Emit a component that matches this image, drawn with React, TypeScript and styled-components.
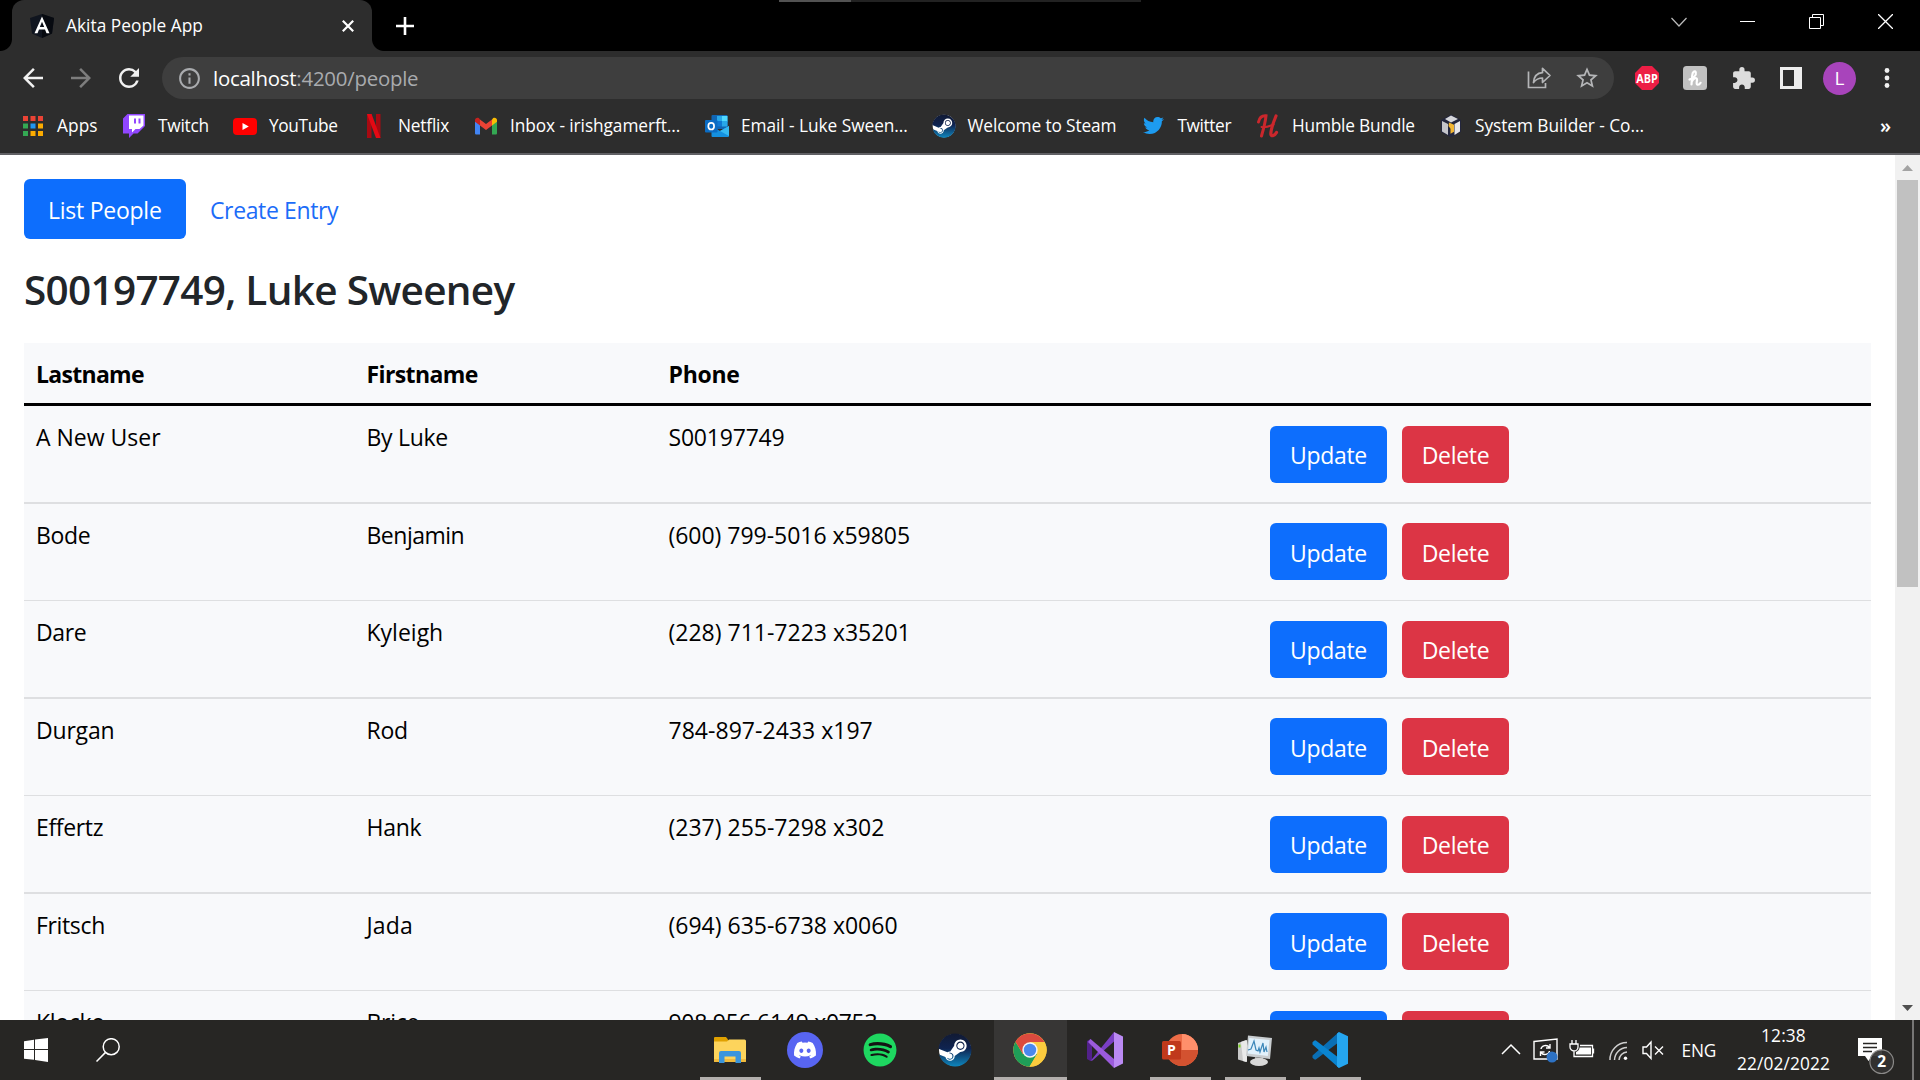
import React from 'react';
import styled, { createGlobalStyle } from 'styled-components';
import { MdArrowBack, MdArrowForward, MdRefresh, MdInfoOutline, MdStarBorder, MdExtension } from 'react-icons/md';
import { FaDiscord, FaSteam, FaTwitter, FaSpotify } from 'react-icons/fa';

const Global = createGlobalStyle`
  * { box-sizing: border-box; }
  html, body { margin: 0; padding: 0; overflow: hidden; }
  body { font-family: "Open Sans", "Noto Sans", sans-serif; background: #fff; }
  svg { display: block; flex: none; }
`;

const Screen = styled.div`
  width: 1920px;
  height: 1080px;
  display: flex;
  flex-direction: column;
  overflow: hidden;
`;

/* ---------- title bar ---------- */

const TitleBar = styled.header`
  position: relative;
  height: 51px;
  flex: none;
  background: #000;
  display: flex;
  justify-content: space-between;
`;

const TopProgress = styled.div`
  position: absolute;
  top: 0;
  left: 779px;
  width: 362px;
  height: 2px;
  background: linear-gradient(to right, #525252 72px, #222 72px);
`;

const TabArea = styled.div`
  display: flex;
  align-items: center;
`;

const Tab = styled.div`
  position: relative;
  width: 360px;
  height: 51px;
  margin-left: 12px;
  padding: 0 18px;
  display: flex;
  align-items: center;
  border-radius: 12px 12px 0 0;
  background: #2d2d2d;
  &::before,
  &::after {
    content: '';
    position: absolute;
    bottom: 0;
    width: 12px;
    height: 12px;
  }
  &::before {
    left: -12px;
    background: radial-gradient(circle at 0 0, #000 11.5px, #2d2d2d 12.5px);
  }
  &::after {
    right: -12px;
    background: radial-gradient(circle at 100% 0, #000 11.5px, #2d2d2d 12.5px);
  }
`;

const TabTitle = styled.span`
  flex: 1;
  margin-left: 12px;
  font-size: 17.3px;
  letter-spacing: 0.04px;
  color: #fff;
  white-space: nowrap;
`;

const NewTab = styled.div`
  margin-left: 24px;
`;

const WindowControls = styled.div`
  display: flex;
`;

const WindowButton = styled.div`
  width: 69px;
  height: 43px;
  display: flex;
  align-items: center;
  justify-content: center;
`;

/* ---------- toolbar ---------- */

const Toolbar = styled.div`
  height: 54px;
  flex: none;
  background: #2d2d2d;
  display: flex;
  align-items: center;
  padding: 0 24px 0 18px;
`;

const NavButtons = styled.div`
  width: 144px;
  display: flex;
  gap: 18px;
`;

const NavIcon = styled.div<{ $dim?: boolean }>`
  width: 30px;
  height: 30px;
  color: ${(p) => (p.$dim ? '#7d7d7d' : '#f1f1f1')};
`;

const Omnibox = styled.div`
  width: 1452px;
  height: 42px;
  border-radius: 21px;
  background: #3e3e3e;
  display: flex;
  align-items: center;
  padding: 0 14px 0 15px;
  color: #a9abae;
`;

const Url = styled.span`
  flex: 1;
  margin-left: 11px;
  font-size: 20.4px;
  letter-spacing: -0.23px;
  color: #a9abae;
  b {
    font-weight: 400;
    color: #fff;
  }
`;

const OmniActions = styled.div`
  display: flex;
  align-items: center;
  gap: 22px;
`;

const Extensions = styled.div`
  display: flex;
  align-items: center;
  gap: 24px;
  padding-left: 21px;
`;

const Avatar = styled.div`
  width: 33px;
  height: 33px;
  margin: 0 4px 0 -3px;
  border-radius: 50%;
  background: #a844bb;
  color: #fff;
  font-size: 19px;
  line-height: 33px;
  text-align: center;
`;

/* ---------- bookmarks ---------- */

const BookmarkBar = styled.div`
  height: 50px;
  flex: none;
  background: #2d2d2d;
  border-bottom: 2px solid #606064;
  display: flex;
  align-items: center;
  padding: 0 29px 7px 21px;
`;

const Bookmark = styled.div<{ $width: number; $track: number }>`
  width: ${(p) => p.$width}px;
  display: flex;
  align-items: center;
  gap: 12px;
  font-size: 17.3px;
  letter-spacing: ${(p) => p.$track}px;
  line-height: 24px;
  color: #fff;
  white-space: nowrap;
`;

const Overflow = styled.span`
  margin-left: auto;
  font-size: 20px;
  font-weight: 600;
  line-height: 20px;
  color: #fff;
`;

/* ---------- page ---------- */

const Viewport = styled.div`
  height: 865px;
  flex: none;
  display: flex;
  background: #fff;
  overflow: hidden;
`;

const Page = styled.main`
  flex: 1;
  height: 865px;
  overflow: hidden;
  padding: 24px 24px 0;
`;

const Pills = styled.nav`
  display: flex;
`;

const Pill = styled.a<{ $active?: boolean }>`
  height: 60px;
  padding: 0 24px;
  width: ${(p) => (p.$active ? '162px' : 'auto')};
  border-radius: 6px;
  font-size: 23px;
  letter-spacing: ${(p) => (p.$active ? -0.25 : -0.38)}px;
  line-height: 62px;
  white-space: nowrap;
  color: ${(p) => (p.$active ? '#fff' : '#1c6cf8')};
  background: ${(p) => (p.$active ? '#0d6efd' : 'transparent')};
`;

const Heading = styled.h2`
  margin: 26px 0 28px;
  font-size: 40.5px;
  font-weight: 600;
  line-height: 50px;
  letter-spacing: -0.7px;
  color: #212529;
`;

const Table = styled.div`
  background: #f8f9fb;
  color: #000;
  font-size: 23px;
`;

const Row = styled.div<{ $even?: boolean }>`
  display: grid;
  grid-template-columns: 330px 302px 602px 1fr;
  height: ${(p) => (p.$even ? 97 : 98)}px;
  border-bottom: ${(p) => (p.$even ? 1 : 2)}px solid #dedfe1;
`;

const HeadRow = styled(Row)`
  height: 63px;
  border-bottom: 3px solid #000;
  font-weight: 700;
`;

const Cell = styled.div<{ $track?: number }>`
  padding: 13px 12px 0 12.5px;
  line-height: 36px;
  letter-spacing: ${(p) => p.$track ?? -0.3}px;
  white-space: nowrap;
  &:first-child {
    padding-left: 12px;
  }
`;

const Action = styled.button<{ $danger?: boolean }>`
  width: ${(p) => (p.$danger ? 107 : 117)}px;
  height: 57px;
  padding: 0;
  border: 0;
  border-radius: 6px;
  background: ${(p) => (p.$danger ? '#dc3545' : '#0d6efd')};
  color: #fff;
  font: 400 23px/54px "Open Sans", "Noto Sans", sans-serif;
  letter-spacing: -0.3px;
`;

const Actions = styled.div<{ $even?: boolean }>`
  display: flex;
  gap: 15px;
  padding: ${(p) => (p.$even ? 19 : 20)}px 12px 0;
  ${Action} {
    padding-top: ${(p) => (p.$even ? 3 : 2)}px;
    line-height: ${(p) => (p.$even ? 54 : 53)}px;
  }
`;

const Scrollbar = styled.div`
  width: 25px;
  height: 865px;
  background: #f1f1f1;
  display: flex;
  flex-direction: column;
  align-items: center;
`;

const ScrollArrow = styled.div`
  height: 25px;
  display: flex;
  align-items: center;
  justify-content: center;
`;

const ScrollThumb = styled.div`
  width: 21px;
  height: 407px;
  margin-bottom: auto;
  background: #c1c1c1;
`;

/* ---------- taskbar ---------- */

const Taskbar = styled.footer`
  height: 60px;
  flex: none;
  background: #272624;
  display: flex;
`;

const StartArea = styled.div`
  width: 694px;
  padding-left: 24px;
  display: flex;
  align-items: center;
  gap: 48px;
`;

const TaskSlots = styled.div`
  display: flex;
  gap: 2px;
`;

const TaskSlot = styled.div<{ $open?: boolean; $active?: boolean }>`
  width: 73px;
  height: 60px;
  display: flex;
  flex-direction: column;
  align-items: center;
  background: ${(p) => (p.$active ? '#373635' : 'transparent')};
  &::after {
    content: '';
    width: ${(p) => (p.$active ? 73 : 61)}px;
    height: 3px;
    background: ${(p) => (p.$open ? '#b3afad' : 'transparent')};
  }
`;

const TaskIcon = styled.div`
  flex: 1;
  padding: 3px 1px 0 0;
  display: flex;
  align-items: center;
`;

const Tray = styled.div`
  flex: 1;
  display: flex;
  align-items: center;
  padding-left: 131px;
  color: #fff;
  font-size: 17.3px;
  letter-spacing: -0.2px;
`;

const TrayIcons = styled.div`
  display: flex;
  align-items: center;
  gap: 10px;
  padding-left: 1px;
`;

const Language = styled.span`
  width: 36px;
  margin-left: 16.5px;
  margin-top: 1px;
  line-height: 24px;
`;

const Clock = styled.div`
  width: 110px;
  margin-left: 11px;
  text-align: center;
  line-height: 28px;
  letter-spacing: 0.15px;
`;

const Notifications = styled.div`
  margin-left: 18px;
  padding-top: 11px;
`;

const ShowDesktop = styled.div`
  width: 8px;
  height: 60px;
  margin-left: auto;
  border-left: 2px solid #777675;
`;

/* ---------- logos ---------- */

const AngularLogo = () => (
  <svg width="24" height="24" viewBox="0 0 24 24">
    <path d="M12 0 24 4l-2 15.500L12 24 2 19.500 0 4z" fill="#10151f" />
    <path d="M12 0 24 4l-2 15.500L12 24z" fill="#070a10" />
    <path d="M12 2.400 4.500 19.200h3l1.500-3.700h6l1.500 3.700h3zM12 7.800l2.200 5.300H9.800z" fill="#fff" fillRule="evenodd" />
  </svg>
);

const AppsLogo = () => {
  const colors = ['#ea4335', '#ea4335', '#ea4335', '#34a853', '#2196f3', '#fbab00', '#34a853', '#fbab00', '#fbab00'];
  return (
    <svg width="24" height="24" viewBox="0 0 24 24">
      {colors.map((c, i) => (
        <rect key={i} x={2 + (i % 3) * 7.500} y={2 + Math.floor(i / 3) * 7.500} width="5" height="5" fill={c} />
      ))}
    </svg>
  );
};

const TwitchLogo = () => (
  <svg width="24" height="24" viewBox="0 0 24 24">
    <path d="M5.500 0 1 4.500v15h6V24l4.500-4.500h4L23 12V0z" fill="#9146ff" />
    <path d="M7 1.500h14.500v10L17.500 15h-4L10 18.500V15H7z" fill="#fff" />
    <path d="M12 4.500h2v5h-2zM16.500 4.500h2v5h-2z" fill="#9146ff" />
  </svg>
);

const YouTubeLogo = () => (
  <svg width="24" height="24" viewBox="0 0 24 24">
    <rect x="0" y="4" width="24" height="17" rx="4" fill="#f00" />
    <path d="M9.500 9v7l6.300-3.500z" fill="#fff" />
  </svg>
);

const NetflixLogo = () => (
  <svg width="24" height="24" viewBox="0 0 24 24">
    <path d="M5 0h4.500v24L5 23.900zM14 0h4.500v24L14 23.900z" fill="#a80a12" />
    <path d="M5 0h4.600l8.900 24H14z" fill="#e50914" />
  </svg>
);

const GmailLogo = () => (
  <svg width="24" height="24" viewBox="0 0 24 24">
    <path d="M1 7v12.200c0 .800.600 1.400 1.400 1.400H6V10z" fill="#4285f4" />
    <path d="M18 10v10.600h3.600c.800 0 1.400-.600 1.400-1.400V7z" fill="#34a853" />
    <path d="M18 5.500v6L23 7.700V6c0-2-2.200-3-3.800-1.900z" fill="#fbbc04" />
    <path d="M6 11.500v-6l6 4.500 6-4.500v6L12 16z" fill="#ea4335" />
    <path d="M1 6v1.700l5 3.800v-6L4.800 4.100C3.200 3 1 4 1 6z" fill="#c5221f" />
  </svg>
);

const OutlookLogo = () => (
  <svg width="24" height="24" viewBox="0 0 24 24">
    <rect x="6.500" y="1" width="16" height="14" rx="1" fill="#1066b5" />
    <rect x="12" y="2" width="5.500" height="5.500" fill="#28a8ea" />
    <rect x="17" y="2" width="5.500" height="5.500" fill="#50d9ff" />
    <rect x="12" y="7" width="5.500" height="5.500" fill="#0f78d4" />
    <rect x="17" y="7" width="5.500" height="5.500" fill="#28a8ea" />
    <path d="M6.500 12 15 17l9-5v10a1 1 0 0 1-1 1H7.500a1 1 0 0 1-1-1z" fill="#1490df" />
    <path d="M15 17l9-5v10z" fill="#35b8f1" />
    <rect x="0" y="6" width="12.500" height="12.500" rx="1" fill="#0a6cc4" />
    <ellipse cx="6.200" cy="12.200" rx="2.900" ry="3.300" fill="none" stroke="#fff" strokeWidth="1.700" />
  </svg>
);

const SteamLogo = ({ size, id }: { size: number; id: string }) => (
  <svg width={size} height={size} viewBox="0 0 34 34">
    <defs>
      <linearGradient id={id} x1="0" y1="0" x2="0" y2="1">
        <stop offset="0" stopColor="#111a33" />
        <stop offset="0.450" stopColor="#0f2350" />
        <stop offset="1" stopColor="#0e86bd" />
      </linearGradient>
    </defs>
    <circle cx="17" cy="17" r="16" fill="#fff" />
    <FaSteam size={34} fill={`url(#${id})`} />
  </svg>
);

const HumbleLogo = () => (
  <svg width="24" height="24" viewBox="0 0 24 24" fill="none" stroke="#cb272c" strokeLinecap="round">
    <path d="M2.500 8C3.500 3.500 6 1.500 10 1.800 9.500 7 7.500 15 5.500 22" strokeWidth="3" />
    <path d="M20 2C17.500 8 15 15 14.800 20c0 2.500 3.700 2.300 5.700-1.500" strokeWidth="3.200" />
    <path d="M5.500 13c4 .800 8-.500 12-2.500" strokeWidth="2" />
  </svg>
);

const BuilderLogo = () => (
  <svg width="24" height="24" viewBox="0 0 24 24">
    <path d="M12 .500 22 6v12l-10 5.500L2 18V6z" fill="#23263c" />
    <path d="M12 1.500 19 5l-7 3.500L6 5z" fill="#d5d6da" />
    <path d="M3 7l6 3v11l-6-3.500z" fill="#c4c5ca" />
    <path d="M21 7l-5.500 3v11l5.500-3.500z" fill="#e7e7ea" />
    <path d="M10 8.500l5 2.200v7l-3.500 2v-5L9.500 12z" fill="#f2b632" />
  </svg>
);

const ShareIcon = () => (
  <svg width="26" height="26" viewBox="0 0 26 26" fill="none" stroke="#b4b5b7" strokeWidth="1.700">
    <path d="M2.500 6.500V22.500H19.500V18" />
    <path d="M7.500 17.500C8 11.500 11.500 8 16.500 7.700V3.300l7.500 7.200-7.500 7V13c-4 0-6.500 1.300-9 4.500z" strokeLinejoin="round" />
  </svg>
);

const AdblockLogo = () => (
  <svg width="24" height="24" viewBox="0 0 24 24" overflow="visible">
    <path d="M7 0h10l7 7v10l-7 7H7l-7-7V7z" fill="#ed1e45" />
    <text x="12" y="16.500" textAnchor="middle" fontFamily="Open Sans, sans-serif" fontWeight="700" fontSize="12" textLength="21.500" lengthAdjust="spacingAndGlyphs" fill="#fff">ABP</text>
  </svg>
);

const HoneyLogo = () => (
  <svg width="24" height="24" viewBox="0 0 24 24">
    <rect width="24" height="24" rx="3.500" fill="#c1c1c1" />
    <path d="M6.500 13.500C10.500 12 13.500 9 12.800 6.300 12 4.300 9.500 5.500 9.200 9.500L8.500 18.500M8.800 15.500C10.500 11.800 14.200 11 14 13.800 13.800 16.500 13 18.300 14.500 18.700 15.800 19 17 17.800 17.600 16.800" fill="none" stroke="#fff" strokeWidth="2.200" strokeLinecap="round" />
  </svg>
);

const SidePanelIcon = () => (
  <svg width="22" height="22" viewBox="0 0 22 22">
    <rect width="22" height="22" fill="#ededed" />
    <rect x="3" y="3" width="11" height="16" fill="#2d2d2d" />
  </svg>
);

const MenuDots = () => (
  <svg width="6" height="22" viewBox="0 0 6 22" fill="#f1f1f1">
    <circle cx="3" cy="3.500" r="2.400" />
    <circle cx="3" cy="11" r="2.400" />
    <circle cx="3" cy="18.500" r="2.400" />
  </svg>
);

const WindowsLogo = () => (
  <svg width="24" height="24" viewBox="0 0 24 24" fill="#fff">
    <path d="M0 3.300 10 1.700V11H0zM11 1.500 24 0v11H11zM0 12h10v9.800L0 20.700zM11 12h13v12l-13-2z" />
  </svg>
);

const SearchIcon = () => (
  <svg width="24" height="24" viewBox="0 0 24 24" fill="none" stroke="#fff" strokeWidth="1.500">
    <circle cx="15.200" cy="8.700" r="8" />
    <path d="M9.500 14.400 .500 23.500" />
  </svg>
);

const ExplorerLogo = () => (
  <svg width="34" height="36" viewBox="0 0 34 36">
    <path d="M1 6a1 1 0 0 1 1-1h11l2 2.500V10H1z" fill="#e0a100" />
    <path d="M1 9.500h13l2-2h15.500A1.500 1.500 0 0 1 33 9v20a1 1 0 0 1-1 1H2a1 1 0 0 1-1-1z" fill="#fdd45c" />
    <path d="M1 27h32v2a1 1 0 0 1-1 1H2a1 1 0 0 1-1-1z" fill="#f2bb3c" />
    <path d="M6 31V21a2 2 0 0 1 2-2h18a2 2 0 0 1 2 2v10h-5.500v-6.500h-11V31z" fill="#3a95dd" />
  </svg>
);

const DiscordBadge = styled.div`
  width: 36px;
  height: 36px;
  border-radius: 50%;
  background: #5865f2;
  color: #fff;
  display: flex;
  align-items: center;
  justify-content: center;
`;

const SpotifyBadge = styled.div`
  width: 34px;
  height: 34px;
  border-radius: 50%;
  background: radial-gradient(circle, #141414 15px, transparent 16px);
  color: #1ed760;
`;

const ChromeLogo = () => (
  <svg width="34" height="34" viewBox="0 0 34 34">
    <circle cx="17" cy="17" r="16.700" fill="#fbcb3e" />
    <path d="M9.900 21.100 2.500 8.700A16.700 16.700 0 0 0 16.500 33.700l7.600-12.600z" fill="#1f9e58" />
    <path d="M17 8.900h14.500A16.700 16.700 0 0 1 16.500 33.700L24.100 21.100z" fill="#fbcb3e" />
    <path d="M2.500 8.700 9.900 21.100 17 8.900h14.500A16.700 16.700 0 0 0 2.500 8.700z" fill="#db4a3e" />
    <circle cx="17" cy="17" r="7.700" fill="#f4f4f4" />
    <circle cx="17" cy="17" r="6.200" fill="#4a88ee" />
  </svg>
);

const VisualStudioLogo = () => (
  <svg width="36" height="36" viewBox="0 0 36 36">
    <path d="M0 9 3.500 7 5 8.500v19L3.500 29 0 27z" fill="#52218a" />
    <path d="M3.500 29 27 0v9.500L5.500 28.500z" fill="#7a3fc4" />
    <path d="M3.500 7 27 27v9L1 10z" fill="#9b5bdc" />
    <path d="M27 0l9 4.500v27L27 36z" fill="#bb8af3" />
  </svg>
);

const VSCodeLogo = () => (
  <svg width="36" height="36" viewBox="0 0 36 36">
    <path d="M.500 23.500 27 0v10L4.200 27.200a1.500 1.500 0 0 1-2 0L.500 25.700z" fill="#0a6fb5" />
    <path d="M.500 12.500 27 36V26L4.200 8.800a1.500 1.500 0 0 0-2 0L.500 10.300z" fill="#0a84d0" />
    <path d="M27 0l9 4.200v27.600L27 36l-2-1.500V1.500z" fill="#25a6f0" />
  </svg>
);

const PowerPointLogo = () => (
  <svg width="36" height="34" viewBox="0 0 36 34">
    <circle cx="20" cy="17" r="16" fill="#ed6c47" />
    <path d="M20 1a16 16 0 0 1 16 16H20z" fill="#ff8f6b" />
    <path d="M4 17h32a16 16 0 0 1-32 0z" fill="#d35230" />
    <rect x="0" y="8" width="19" height="18.500" rx="1.500" fill="#c0391b" />
    <text x="9.300" y="22.300" textAnchor="middle" fontFamily="Open Sans, sans-serif" fontWeight="700" fontSize="14" fill="#fff">P</text>
  </svg>
);

const TaskManagerLogo = () => (
  <svg width="36" height="34" viewBox="0 0 36 34">
    <path d="M1 10 9 7v22l-8-2.500z" fill="#c9c9c9" />
    <path d="M4 9l6-2v22l-4-1z" fill="#e9e9e9" />
    <rect x="1.500" y="11.500" width="2" height="3" fill="#7ad41d" />
    <path d="M11 2.500 35 5l-2 21-24-3z" fill="#c9cdd0" />
    <path d="M12.300 5 32.500 7l-1.700 16-20-2.500z" fill="#e2f1fb" />
    <path d="M11 17l3-1 3-8 2 9 2 1 1-3 1 4 3-9 1 9 2-5 1 5" fill="none" stroke="#3b86b8" strokeWidth="1.200" />
    <path d="M18 24l8 1v3h-8z" fill="#a9a9a9" />
    <ellipse cx="22" cy="29" rx="9" ry="4" fill="#d8d8d8" />
  </svg>
);

const bookmarks: { label: string; width: number; track: number; icon: React.ReactNode }[] = [
  { label: 'Apps', width: 101, track: 0.1, icon: <AppsLogo /> },
  { label: 'Twitch', width: 111, track: -0.25, icon: <TwitchLogo /> },
  { label: 'YouTube', width: 129, track: -0.35, icon: <YouTubeLogo /> },
  { label: 'Netflix', width: 112, track: -0.2, icon: <NetflixLogo /> },
  { label: 'Inbox - irishgamerft...', width: 231, track: -0.08, icon: <GmailLogo /> },
  { label: 'Email - Luke Sween...', width: 226.5, track: -0.05, icon: <OutlookLogo /> },
  { label: 'Welcome to Steam', width: 210, track: -0.12, icon: <SteamLogo size={24} id="steam-small" /> },
  { label: 'Twitter', width: 114.5, track: -0.4, icon: <FaTwitter size={21} color="#1d9bf0" style={{ margin: '0 1.5px' }} /> },
  { label: 'Humble Bundle', width: 183, track: -0.2, icon: <HumbleLogo /> },
  { label: 'System Builder - Co...', width: 210, track: -0.05, icon: <BuilderLogo /> },
];

type Field = { text: string; track?: number };

const people: Field[][] = [
  [{ text: 'A New User', track: 0 }, { text: 'By Luke' }, { text: 'S00197749', track: -0.2 }],
  [{ text: 'Bode' }, { text: 'Benjamin', track: -0.5 }, { text: '(600) 799-5016 x59805', track: -0.03 }],
  [{ text: 'Dare', track: -0.4 }, { text: 'Kyleigh', track: 0 }, { text: '(228) 711-7223 x35201', track: 0 }],
  [{ text: 'Durgan', track: -0.2 }, { text: 'Rod' }, { text: '784-897-2433 x197', track: 0.03 }],
  [{ text: 'Effertz', track: -0.35 }, { text: 'Hank' }, { text: '(237) 255-7298 x302', track: 0 }],
  [{ text: 'Fritsch', track: -0.35 }, { text: 'Jada', track: 0.15 }, { text: '(694) 635-6738 x0060', track: 0 }],
  [{ text: 'Klocko' }, { text: 'Brice' }, { text: '908.956.6149 x0753' }],
];

const tasks: { name: string; open?: boolean; active?: boolean; icon: React.ReactNode }[] = [
  { name: 'explorer', open: true, icon: <ExplorerLogo /> },
  { name: 'discord', icon: <DiscordBadge><FaDiscord size={24} /></DiscordBadge> },
  { name: 'spotify', icon: <SpotifyBadge><FaSpotify size={34} /></SpotifyBadge> },
  { name: 'steam', icon: <SteamLogo size={34} id="steam-large" /> },
  { name: 'chrome', open: true, active: true, icon: <ChromeLogo /> },
  { name: 'visual-studio', icon: <VisualStudioLogo /> },
  { name: 'powerpoint', open: true, icon: <PowerPointLogo /> },
  { name: 'task-manager', open: true, icon: <TaskManagerLogo /> },
  { name: 'vscode', open: true, icon: <VSCodeLogo /> },
];

export default function App() {
  return (
    <Screen>
      <Global />
      <TitleBar>
        <TopProgress />
        <TabArea>
          <Tab>
            <AngularLogo />
            <TabTitle>Akita People App</TabTitle>
            <svg width="12" height="12" viewBox="0 0 12 12" stroke="#fff" strokeWidth="2.200">
              <path d="M.800.800 11.200 11.200M11.200.800.800 11.200" />
            </svg>
          </Tab>
          <NewTab>
            <svg width="18" height="18" viewBox="0 0 18 18" stroke="#fff" strokeWidth="2.600">
              <path d="M9 0v18M0 9h18" />
            </svg>
          </NewTab>
        </TabArea>
        <WindowControls>
          <WindowButton>
            <svg width="16" height="10" viewBox="0 0 16 10" fill="none" stroke="#bbb" strokeWidth="1.200">
              <path d="M.500 1 8 9l7.500-8" />
            </svg>
          </WindowButton>
          <WindowButton>
            <svg width="15" height="15" viewBox="0 0 15 15" fill="#fff">
              <rect y="7" width="15" height="1" />
            </svg>
          </WindowButton>
          <WindowButton>
            <svg width="15" height="15" viewBox="0 0 15 15" fill="none" stroke="#fff">
              <path d="M.500 3.500h11v11H.500zM3.500 3.500v-3h11v11h-3" />
            </svg>
          </WindowButton>
          <WindowButton>
            <svg width="15" height="15" viewBox="0 0 15 15" stroke="#fff" strokeWidth="1.300">
              <path d="M0 0l15 15M15 0 0 15" />
            </svg>
          </WindowButton>
        </WindowControls>
      </TitleBar>

      <Toolbar>
        <NavButtons>
          <NavIcon><MdArrowBack size={30} /></NavIcon>
          <NavIcon $dim><MdArrowForward size={30} /></NavIcon>
          <NavIcon><MdRefresh size={30} /></NavIcon>
        </NavButtons>
        <Omnibox>
          <MdInfoOutline size={25} />
          <Url><b>localhost</b>:4200/people</Url>
          <OmniActions>
            <ShareIcon />
            <MdStarBorder size={26} color="#b4b5b7" />
          </OmniActions>
        </Omnibox>
        <Extensions>
          <AdblockLogo />
          <HoneyLogo />
          <MdExtension size={25} color="#dcdcdc" />
          <SidePanelIcon />
          <Avatar>L</Avatar>
          <MenuDots />
        </Extensions>
      </Toolbar>

      <BookmarkBar>
        {bookmarks.map((b) => (
          <Bookmark key={b.label} $width={b.width} $track={b.track}>
            {b.icon}
            {b.label}
          </Bookmark>
        ))}
        <Overflow>»</Overflow>
      </BookmarkBar>

      <Viewport>
        <Page>
          <Pills>
            <Pill $active>List People</Pill>
            <Pill>Create Entry</Pill>
          </Pills>
          <Heading>S00197749, Luke Sweeney</Heading>
          <Table>
            <HeadRow>
              <Cell $track={-0.7}>Lastname</Cell>
              <Cell $track={-0.6}>Firstname</Cell>
              <Cell>Phone</Cell>
            </HeadRow>
            {people.map((fields, i) => (
              <Row key={fields[0].text} $even={i % 2 === 1}>
                {fields.map((f) => (
                  <Cell key={f.text} $track={f.track}>{f.text}</Cell>
                ))}
                <Actions $even={i % 2 === 1}>
                  <Action>Update</Action>
                  <Action $danger>Delete</Action>
                </Actions>
              </Row>
            ))}
          </Table>
        </Page>
        <Scrollbar>
          <ScrollArrow>
            <svg width="11" height="6" viewBox="0 0 11 6" fill="#a3a3a3"><path d="M0 6h11L5.500 0z" /></svg>
          </ScrollArrow>
          <ScrollThumb />
          <ScrollArrow>
            <svg width="11" height="6" viewBox="0 0 11 6" fill="#505050"><path d="M0 0h11L5.500 6z" /></svg>
          </ScrollArrow>
        </Scrollbar>
      </Viewport>

      <Taskbar>
        <StartArea>
          <WindowsLogo />
          <SearchIcon />
        </StartArea>
        <TaskSlots>
          {tasks.map((t) => (
            <TaskSlot key={t.name} $open={t.open} $active={t.active}>
              <TaskIcon>{t.icon}</TaskIcon>
            </TaskSlot>
          ))}
        </TaskSlots>
        <Tray>
          <TrayIcons>
            <svg width="24" height="24" viewBox="0 0 24 24" fill="none" stroke="#fff" strokeWidth="1.500">
              <path d="M3 16l9-9 9 9" />
            </svg>
            <svg width="26" height="26" viewBox="0 0 26 26" fill="none" stroke="#fff" strokeWidth="1.400">
              <path d="M1 4.500 24 2v20L1 22z" />
              <path d="M8 12c.500-3.500 6-5 8.500-1.500M17 7v4h-4M16.500 14c-.500 3.500-6 5-8.500 1.500M7.500 19v-4h4" />
              <circle cx="19" cy="20" r="5.500" fill="#2d72c4" stroke="none" />
            </svg>
            <svg width="26" height="24" viewBox="0 0 26 24" fill="none" stroke="#fff" strokeWidth="1.300">
              <path d="M3 2v4M7 2v4M1 6h8v3a4 4 0 0 1-8 0zM5 13v5.500H23.500v-11H11" />
              <path d="M10.500 9.500H22v7H7V14c2-1 3.500-2.500 3.500-4.500z" fill="#fff" stroke="none" />
              <path d="M24.500 10.500v5" />
            </svg>
            <svg width="26" height="24" viewBox="0 0 26 24" fill="none" stroke="#cfcfcf" strokeWidth="1.500">
              <path d="M5 22A17 17 0 0 1 22 4.500M9.500 22A13 13 0 0 1 22 9.500M14 22a8.500 8.500 0 0 1 8-8" />
              <circle cx="20.500" cy="20.300" r="1.700" fill="#fff" stroke="none" />
            </svg>
            <svg width="24" height="24" viewBox="0 0 24 24" fill="none" stroke="#fff" strokeWidth="1.400">
              <path d="M2 9h3.500L10 4v16.500L5.500 15.500H2zM14 8.500l8 8M22 8.500l-8 8" />
            </svg>
          </TrayIcons>
          <Language>ENG</Language>
          <Clock>
            <div>12:38</div>
            <div>22/02/2022</div>
          </Clock>
          <Notifications>
            <svg width="38" height="38" viewBox="0 0 38 38">
              <path d="M1 1h24v18H15l-3.500 5-3.500-5H1z" fill="#fff" />
              <path d="M6 6.500h14M6 10.500h14M6 14.500h9" stroke="#272624" strokeWidth="1.400" />
              <circle cx="24.700" cy="24.700" r="11.800" fill="#343332" fillOpacity="0.930" stroke="#8b8a89" strokeWidth="1.200" />
              <text x="24.700" y="30" textAnchor="middle" fontFamily="Open Sans, sans-serif" fontWeight="700" fontSize="15.500" fill="#fff">2</text>
            </svg>
          </Notifications>
          <ShowDesktop />
        </Tray>
      </Taskbar>
    </Screen>
  );
}
